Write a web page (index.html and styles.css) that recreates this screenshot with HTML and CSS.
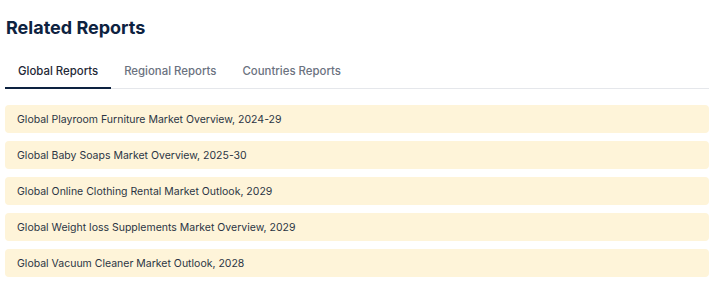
FILE: index.html
```html
<!DOCTYPE html>
<html lang="en">
<head>
    <meta charset="UTF-8">
    <meta name="viewport" content="width=device-width, initial-scale=1.0">
    <title>Related Reports</title>
    <link rel="stylesheet" href="styles.css">
</head>
<body>
    <div class="container">
        <h2 class="title">Related Reports</h2>
        <div class="tabs">
            <div class="tab active">Global Reports</div>
            <div class="tab">Regional Reports</div>
            <div class="tab">Countries Reports</div>
        </div>
        <div class="report-list">
            <div class="report-item">Global Playroom Furniture Market Overview, 2024-29</div>
            <div class="report-item">Global Baby Soaps Market Overview, 2025-30</div>
            <div class="report-item">Global Online Clothing Rental Market Outlook, 2029</div>
            <div class="report-item">Global Weight loss Supplements Market Overview, 2029</div>
            <div class="report-item">Global Vacuum Cleaner Market Outlook, 2028</div>
        </div>
    </div>
</body>
</html>
```

FILE: styles.css
```css
body {
    font-family: Inter, "Noto Sans", sans-serif;
    margin: 0;
    padding: 0;
    background-color: #fff;
}
.container {
    padding: 14px 6px 0 5px;
}
.title {
    margin: 0 0 0 1px;
    font-size: 18px;
    font-weight: 700;
    line-height: 28px;
    color: #0d2240;
}
.tabs {
    display: flex;
    margin-top: 16px;
    border-bottom: 1px solid #e5e7eb;
}
.tab {
    padding: 6px 13px 8px;
    font-size: 11.4px;
    font-weight: 500;
    line-height: 15px;
    color: #6b7280;
    border-bottom: 2px solid transparent;
    margin-bottom: -1px;
}
.tab.active {
    color: #1f2937;
    border-bottom-color: #0d2240;
}
.report-list {
    display: flex;
    flex-direction: column;
    gap: 8px;
    margin-top: 16px;
}
.report-item {
    background-color: #fef4d9;
    border-radius: 4px;
    padding: 0 12px;
    height: 28px;
    display: flex;
    align-items: center;
    font-size: 10.5px;
    color: #2b3444;
}
```
